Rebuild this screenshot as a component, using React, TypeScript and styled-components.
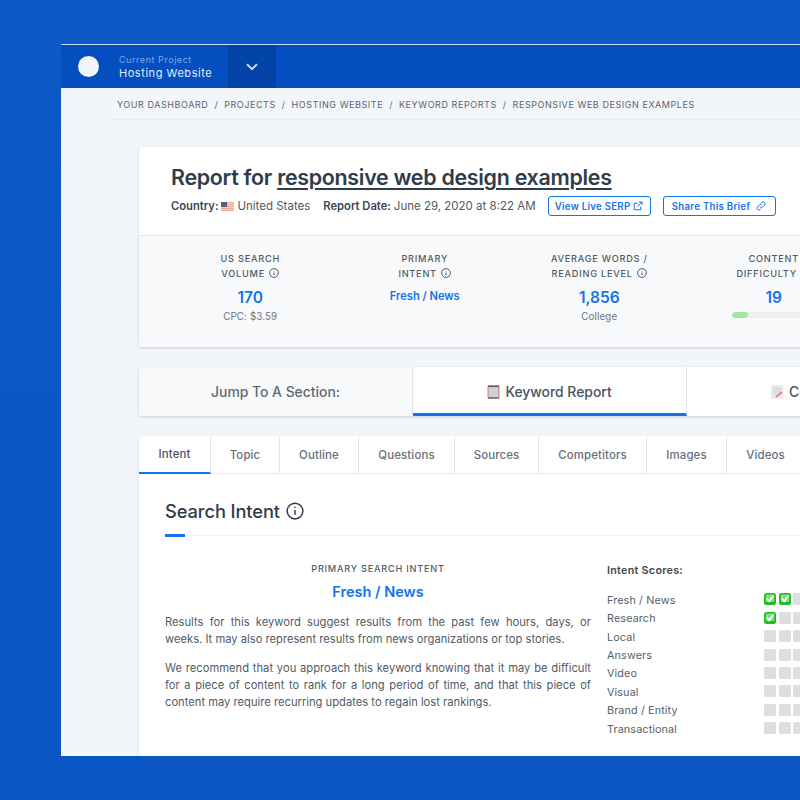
import React from "react";
import styled, { createGlobalStyle } from "styled-components";

const Global = createGlobalStyle`
  html, body { margin: 0; padding: 0; background: #0b57c7; }
  * { box-sizing: border-box; }
  body { font-family: Inter, "Liberation Sans", sans-serif; -webkit-font-smoothing: antialiased; }
`;
const Page = styled.div`
  width: 800px; height: 800px; overflow: hidden; padding: 44px 0 44px 61px;
  background: linear-gradient(180deg, #0c59c8 0%, #0a55c4 100%);
`;
const Window = styled.div`
  width: 739px; height: 712px; overflow: hidden; background: #f3f6f9;
  border-top: 1px solid #c9d9f2; display: flex; flex-direction: column;
`;
const TopBar = styled.header`
  height: 43px; flex: none; background: #044fbf; display: flex; align-items: stretch; color: #eef3fb;
`;
const ProjectBlock = styled.div`
  width: 167px; display: flex; align-items: center; padding-left: 17px; gap: 20px;
`;
const LogoDot = styled.div`width: 21px; height: 21px; border-radius: 50%; background: #f1f4f8;`;
const ProjectText = styled.div`display: flex; flex-direction: column; gap: 1px; padding-top: 1px;`;
const ProjectLabel = styled.span`font-size: 9px; line-height: 11px; letter-spacing: .55px; color: #79a9f0;`;
const ProjectName = styled.span`font-size: 11px; line-height: 14px; letter-spacing: .55px; color: #e3ecfa;`;
const DropButton = styled.div`
  width: 48px; background: #0344a9; display: flex; align-items: center; justify-content: center; padding-top: 1px;
`;
const Body = styled.main`flex: 1; padding-left: 49px; min-height: 0;`;
const Crumbs = styled.nav`
  height: 32px; width: 690px; border-bottom: 1px solid #e9ecef; padding: 2px 0 0 7px;
  display: flex; align-items: center; gap: 6px; font-size: 9px; letter-spacing: .56px; color: #5b6470; text-transform: uppercase; white-space: nowrap;
`;
const Content = styled.div`padding: 27px 0 0 29px; width: 900px;`;
const Card = styled.section`
  width: 800px; background: #fff; border-radius: 3px; box-shadow: 0 1px 3px rgba(40,55,75,.2); overflow: hidden;
`;
const CardHead = styled.div`height: 89px; padding: 14px 32px 0; border-bottom: 1px solid #e2e5e9;`;
const Title = styled.h1`
  margin: 0; font-size: 21.4px; line-height: 32px; font-weight: 600; color: #2f3c4a; letter-spacing: -.28px; white-space: nowrap;
`;
const TitleLink = styled.span`text-decoration: underline; text-decoration-thickness: 1.5px; text-underline-offset: 3px;`;
const Meta = styled.div`display: flex; align-items: center; font-size: 11.5px; color: #4e5964; margin-top: 1px; height: 24px; white-space: nowrap;`;
const MetaLabel = styled.b`font-weight: 600; font-size: 11.2px; color: #3a4652; margin-right: 3px;`;
const MetaValue = styled.span<{ $gap: number }>`margin-right: ${(p) => p.$gap}px; display: inline-flex; align-items: center; gap: 3px;`;
const OutlineBtn = styled.span<{ $w: number; $mr?: number }>`
  width: ${(p) => p.$w}px; height: 20px; margin-right: ${(p) => p.$mr ?? 0}px; border: 1.5px solid #1273ea; border-radius: 3px;
  color: #1273ea; font-size: 9.7px; font-weight: 600; letter-spacing: .25px; display: inline-flex; align-items: center; justify-content: center; gap: 3px;
`;
const Stats = styled.div`
  height: 111px; background: #f8f9fa; padding: 16px 0 0 24px; display: flex; align-items: flex-start;
`;
const Stat = styled.div`width: 174.5px; flex: none; display: flex; flex-direction: column; align-items: center; text-align: center;`;
const StatLabel = styled.div`
  font-size: 9.2px; line-height: 14.5px; letter-spacing: .75px; font-weight: 500; color: #515b67; text-transform: uppercase; white-space: nowrap;
`;
const Big = styled.div`font-size: 15.5px; line-height: 22px; font-weight: 600; color: #1273ea; margin-top: 6px;`;
const IntentValue = styled.div`font-size: 11.1px; line-height: 18px; font-weight: 600; color: #1273ea; margin-top: 6px;`;
const Sub = styled.div`font-size: 9.8px; line-height: 16px; color: #6c7580; letter-spacing: .1px;`;
const Meter = styled.div`width: 108px; height: 6px; border-radius: 3px; background: #eceef0; margin: 3px 0 0 45px; align-self: flex-start; overflow: hidden;`;
const MeterFill = styled.div`height: 100%; border-radius: 3px; background: #a3e59f;`;
const JumpBar = styled.div`
  margin-top: 20px; width: 830px; height: 49px; display: flex; background: #fff; box-shadow: 0 1px 3px rgba(40,55,75,.2); border-radius: 3px; overflow: hidden;
`;
const JumpLabel = styled.div`
  width: 274px; flex: none; background: #f8f9fa; border-right: 1px solid #e2e5e9; display: flex; align-items: center; justify-content: center;
  font-size: 13.9px; font-weight: 500; color: #606a75;
`;
const JumpTab = styled.div<{ $active?: boolean; $w: number }>`
  width: ${(p) => p.$w}px; flex: none; display: flex; align-items: center; justify-content: center;
  padding-top: 3px; gap: 5px; font-size: 13.9px; font-weight: 500; color: #48535f; white-space: nowrap;
  border-right: 1px solid #e4e8ed; border-bottom: 3px solid ${(p) => (p.$active ? "#1273ea" : "transparent")};
`;
const Panel = styled.section`
  margin-top: 20px; width: 800px; height: 400px; background: #fff; border-radius: 3px 3px 0 0; box-shadow: 0 1px 3px rgba(40,55,75,.14);
`;
const Tabs = styled.div`display: flex; height: 38px; border-bottom: 1px solid #e8ebef;`;
const Tab = styled.div<{ $active?: boolean; $w: number }>`
  width: ${(p) => p.$w}px; flex: none; display: flex; align-items: center; justify-content: center; font-size: 11.4px; font-weight: 500; letter-spacing: .15px;
  color: ${(p) => (p.$active ? "#48535f" : "#66707b")}; border-right: 1px solid #e2e6ea; margin-bottom: ${(p) => (p.$active ? "-1px" : "0")};
  border-bottom: ${(p) => (p.$active ? "2px solid #1273ea" : "none")};
`;
const PanelBody = styled.div`padding: 24px 26px 0;`;
const Heading = styled.h2`
  margin: 0; font-size: 18.3px; line-height: 26px; font-weight: 500; color: #2f3c4a; display: flex; align-items: center; gap: 5px; letter-spacing: -.1px;
`;
const Rule = styled.div`
  margin-top: 10px; width: 740px; height: 3px; position: relative; background: linear-gradient(#fff 1px, #f1f3f5 1px, #f1f3f5 2px, #fff 2px);
  &::before { content: ""; position: absolute; left: 0; top: 0; width: 20px; height: 3px; background: #1273ea; }
`;
const Columns = styled.div`display: flex; margin-top: 25px;`;
const Left = styled.div`width: 426px; flex: none;`;
const Eyebrow = styled.div`
  text-align: center; font-size: 9.2px; line-height: 13px; letter-spacing: .75px; font-weight: 500; color: #515b67; text-transform: uppercase;
`;
const Lead = styled.div`text-align: center; font-size: 14.5px; line-height: 20px; font-weight: 600; color: #1273ea; margin-top: 6.5px;`;
const Para = styled.p`
  margin: 12px 0 0; font-size: 11.2px; line-height: 17px; color: #515b67; text-align: justify;
  & + & { margin-top: 12px; }
`;
const Right = styled.div`margin-left: 16px; width: 200px; flex: none;`;
const ScoreTitle = styled.div`font-size: 10.8px; line-height: 14px; font-weight: 600; letter-spacing: .25px; color: #3f4a56; margin-top: 2px; margin-bottom: 13px;`;
const ScoreRow = styled.div`display: flex; align-items: center; height: 18.45px; font-size: 10.8px; color: #565f6b;`;
const ScoreName = styled.span`width: 157px; flex: none; letter-spacing: .12px;`;
const Squares = styled.span`display: flex; gap: 2.7px; margin-top: -2px;`;
const Empty = styled.span`width: 12px; height: 12px; border-radius: 1.5px; background: #dcdee1;`;

const Info = ({ s = 10, c = "#515b67", w = 1 }: { s?: number; c?: string; w?: number }) => (
  <svg width={s} height={s} viewBox="0 0 16 16" fill="none" stroke={c} strokeWidth={w * 16 / s} style={{ verticalAlign: "-1.5px", marginLeft: 1 }}>
    <circle cx="8" cy="8" r="7" /><path d="M8 7.2v4.2M8 4.2v1.2" />
  </svg>
);
const Check = () => (
  <svg width="12" height="12" viewBox="0 0 12 12">
    <rect width="12" height="12" rx="2.5" fill="#1cbf20" />
    <rect x="1.8" y="1.4" width="8.4" height="7.6" rx="1" fill="#c8f3c6" opacity=".6" />
    <path d="M2.8 5.2l2.4 3.2L9.6 2.6" fill="none" stroke="#fff" strokeWidth="1.7" />
  </svg>
);
const Flag = () => (
  <svg width="13" height="9" viewBox="0 0 13 9">
    <rect width="13" height="9" fill="#e9a99b" />
    <path d="M0 1.5h13M0 3.5h13M0 5.5h13M0 7.5h13" stroke="#f4dcd6" strokeWidth=".8" />
    <rect width="6" height="5" fill="#5a5f74" />
  </svg>
);
const Clipboard = () => (
  <svg width="13" height="14" viewBox="0 0 13 14">
    <rect x=".5" y=".5" width="12" height="13" rx="1" fill="#d9806a" />
    <rect x="1.6" y="2" width="9.8" height="10.4" fill="#cfd2d5" />
    <rect x="1" y=".5" width="11" height="1.6" fill="#5c6068" />
    <rect x="1" y="12.4" width="11" height="1.2" fill="#5c6068" />
  </svg>
);
const Memo = () => (
  <svg width="13" height="14" viewBox="0 0 13 14">
    <rect width="12.5" height="14" fill="#e9eaec" />
    <path d="M2 3h8M2 5h8M2 7h6M2 9h4" stroke="#c5c8cd" strokeWidth=".7" />
    <path d="M5 12l6-5" stroke="#e58a76" strokeWidth="2.2" />
  </svg>
);
const Ext = () => (
  <svg width="10" height="10" viewBox="0 0 16 16" fill="none" stroke="#1273ea" strokeWidth="1.6">
    <path d="M12.5 9v5H2V3.5h5.5M9.5 1.5h5v5M14.5 1.5L7 9" />
  </svg>
);
const LinkIcon = () => (
  <svg width="10" height="10" viewBox="0 0 16 16" fill="none" stroke="#1273ea" strokeWidth="1.6" style={{ marginLeft: 3 }}>
    <path d="M6.5 9.5a3 3 0 0 0 4.3 0l2.8-2.8a3 3 0 0 0-4.3-4.3L8 3.7" />
    <path d="M9.5 6.5a3 3 0 0 0-4.3 0L2.4 9.3a3 3 0 0 0 4.3 4.3L8 12.3" />
  </svg>
);

const scores: [string, number][] = [
  ["Fresh / News", 2], ["Research", 1], ["Local", 0], ["Answers", 0],
  ["Video", 0], ["Visual", 0], ["Brand / Entity", 0], ["Transactional", 0],
];
const tabs: [string, number][] = [
  ["Intent", 72], ["Topic", 69], ["Outline", 79], ["Questions", 96], ["Sources", 84],
  ["Competitors", 108], ["Images", 80], ["Videos", 78],
];
const crumbs = ["Your Dashboard", "Projects", "Hosting Website", "Keyword Reports", "Responsive Web Design Examples"];

export default function App() {
  return (
    <Page>
      <Global />
      <Window>
        <TopBar>
          <ProjectBlock>
            <LogoDot />
            <ProjectText>
              <ProjectLabel>Current Project</ProjectLabel>
              <ProjectName>Hosting Website</ProjectName>
            </ProjectText>
          </ProjectBlock>
          <DropButton>
            <svg width="12" height="8" viewBox="0 0 12 8" fill="none" stroke="#cfdcf2" strokeWidth="2"><path d="M1 1.2l5 5 5-5" /></svg>
          </DropButton>
        </TopBar>
        <Body>
          <Crumbs>
            {crumbs.map((c, i) => (
              <React.Fragment key={c}>
                {i > 0 && <span>/</span>}
                <span>{c}</span>
              </React.Fragment>
            ))}
          </Crumbs>
          <Content>
            <Card>
              <CardHead>
                <Title>Report for <TitleLink>responsive web design examples</TitleLink></Title>
                <Meta>
                  <MetaLabel>Country:</MetaLabel>
                  <MetaValue $gap={13}><Flag /> United States</MetaValue>
                  <MetaLabel>Report Date:</MetaLabel>
                  <MetaValue $gap={12}>June 29, 2020 at 8:22 AM</MetaValue>
                  <OutlineBtn $w={103} $mr={12}>View Live SERP <Ext /></OutlineBtn>
                  <OutlineBtn $w={113}>Share This Brief <LinkIcon /></OutlineBtn>
                </Meta>
              </CardHead>
              <Stats>
                <Stat>
                  <StatLabel>US Search<br />Volume <Info /></StatLabel>
                  <Big>170</Big>
                  <Sub>CPC: $3.59</Sub>
                </Stat>
                <Stat>
                  <StatLabel>Primary<br />Intent <Info /></StatLabel>
                  <IntentValue>Fresh / News</IntentValue>
                </Stat>
                <Stat>
                  <StatLabel>Average Words /<br />Reading Level <Info /></StatLabel>
                  <Big>1,856</Big>
                  <Sub>College</Sub>
                </Stat>
                <Stat>
                  <StatLabel>Content<br />Difficulty <Info /></StatLabel>
                  <Big>19</Big>
                  <Meter><MeterFill style={{ width: `${(16 / 108) * 100}%` }} /></Meter>
                </Stat>
              </Stats>
            </Card>
            <JumpBar>
              <JumpLabel>Jump To A Section:</JumpLabel>
              <JumpTab $active $w={274}><Clipboard /> Keyword Report</JumpTab>
              <JumpTab $w={275}><Memo /> Content Brief</JumpTab>
            </JumpBar>
            <Panel>
              <Tabs>
                {tabs.map(([t, w], i) => <Tab key={t} $w={w} $active={i === 0}>{t}</Tab>)}
              </Tabs>
              <PanelBody>
                <Heading>Search Intent <Info s={18} c="#2f3c4a" w={1.5} /></Heading>
                <Rule />
                <Columns>
                  <Left>
                    <Eyebrow>Primary Search Intent</Eyebrow>
                    <Lead>Fresh / News</Lead>
                    <Para>Results for this keyword suggest results from the past few hours, days, or weeks. It may also represent results from news organizations or top stories.</Para>
                    <Para>We recommend that you approach this keyword knowing that it may be difficult for a piece of content to rank for a long period of time, and that this piece of content may require recurring updates to regain lost rankings.</Para>
                  </Left>
                  <Right>
                    <ScoreTitle>Intent Scores:</ScoreTitle>
                    {scores.map(([name, n]) => (
                      <ScoreRow key={name}>
                        <ScoreName>{name}</ScoreName>
                        <Squares>
                          {[0, 1, 2].map((i) => (i < n ? <Check key={i} /> : <Empty key={i} />))}
                        </Squares>
                      </ScoreRow>
                    ))}
                  </Right>
                </Columns>
              </PanelBody>
            </Panel>
          </Content>
        </Body>
      </Window>
    </Page>
  );
}
